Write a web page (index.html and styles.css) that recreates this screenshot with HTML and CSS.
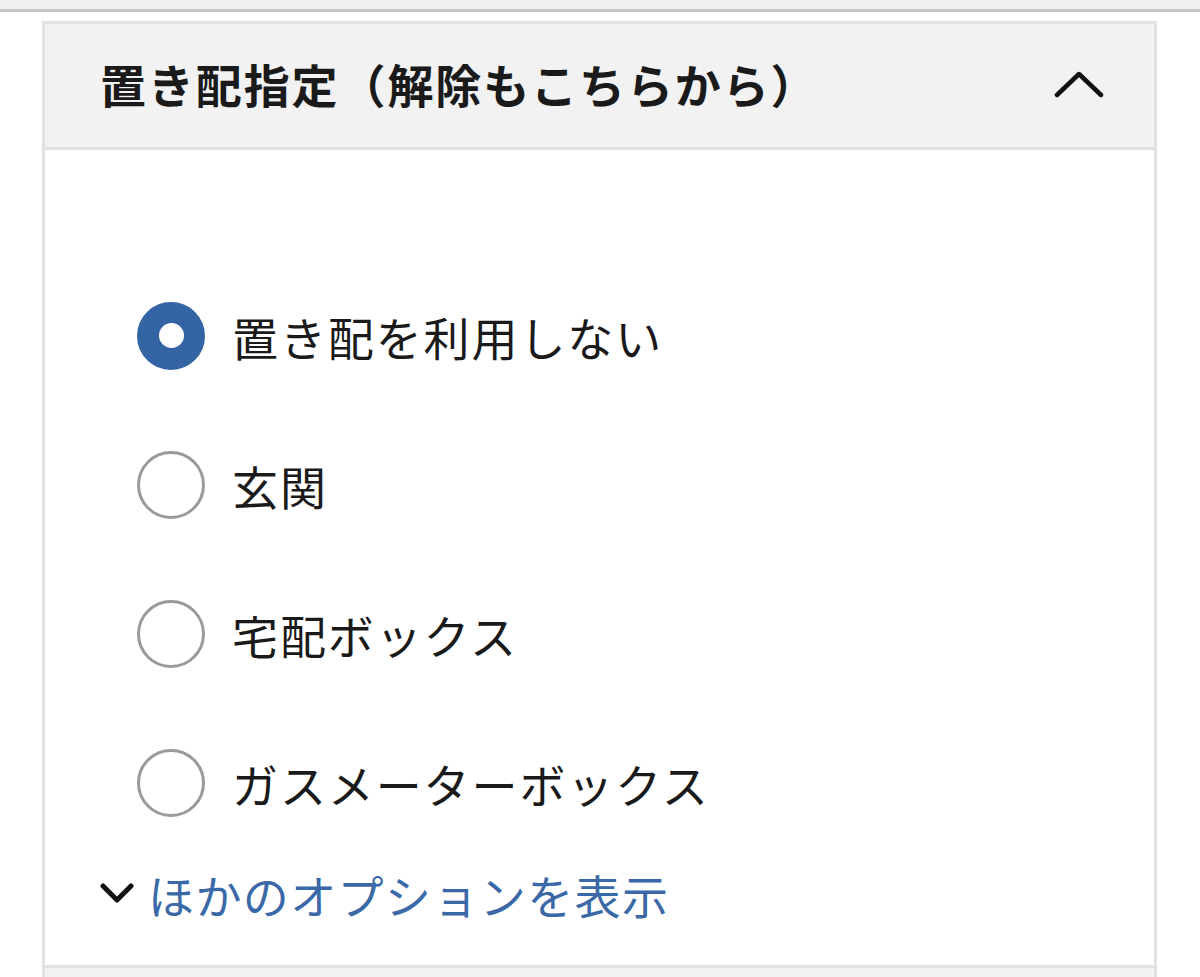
FILE: index.html
```html
<!DOCTYPE html>
<html lang="ja">
<head>
    <meta charset="UTF-8">
    <meta name="viewport" content="width=device-width, initial-scale=1.0">
    <title>置き配指定</title>
    <link rel="stylesheet" href="styles.css">
</head>
<body>
    <div class="topbar"></div>
    <div class="wrap">
        <div class="panel">
            <div class="panel-head">
                <h2>置き配指定（解除もこちらから）</h2>
                <svg class="chev-up" width="50" height="30" viewBox="0 0 50 30">
                    <path d="M3 26 L25 5 L47 26" fill="none" stroke="#111" stroke-width="4.5" stroke-linecap="round" stroke-linejoin="round"/>
                </svg>
            </div>
            <div class="panel-body">
                <label class="opt"><span class="radio checked"></span>置き配を利用しない</label>
                <label class="opt"><span class="radio"></span>玄関</label>
                <label class="opt"><span class="radio"></span>宅配ボックス</label>
                <label class="opt"><span class="radio"></span>ガスメーターボックス</label>
                <a class="more" href="#">
                    <svg width="34" height="24" viewBox="0 0 34 24">
                        <path d="M3 4 L17 18 L31 4" fill="none" stroke="#111" stroke-width="5" stroke-linecap="round" stroke-linejoin="round"/>
                    </svg>
                    ほかのオプションを表示
                </a>
            </div>
        </div>
        <div class="next"></div>
    </div>
</body>
</html>
```

FILE: styles.css
```css
body { margin: 0; background: #fff; font-family: "Noto Sans CJK JP", "Noto Sans", sans-serif; color: #1a1a1a; }
.topbar { height: 9px; background: #f0f0f0; border-bottom: 3px solid #c6c6c6; }
.wrap { padding: 9px 43px 0 42px; }
.panel { border: 3px solid #e2e2e2; border-bottom: none; }
.panel-head { height: 123px; background: #f2f2f2; border-bottom: 3px solid #e2e2e2; display: flex; align-items: center; justify-content: space-between; padding: 0 50px 0 55px; }
.panel-head h2 { margin: 0; font-size: 46px; font-weight: 700; letter-spacing: 1.9px; padding-bottom: 6px; }
.chev-up { margin-bottom: 4px; }
.panel-body { padding: 111px 0 34px 92px; }
.opt { height: 149px; display: flex; align-items: center; font-size: 46px; letter-spacing: 1.9px; }
.radio { width: 62px; height: 62px; border: 3px solid #9a9a9a; border-radius: 50%; margin-right: 27px; box-sizing: content-box; flex: none; position: relative; }
.radio.checked { border-color: #3564a5; background: #3564a5; }
.radio.checked::after { content: ""; position: absolute; left: 50%; top: 50%; width: 25px; height: 25px; margin: -12.5px 0 0 -12.5px; border-radius: 50%; background: #fff; }
.more { display: flex; align-items: center; gap: 14px; height: 74px; margin-left: -37px; font-size: 46px; color: #3b69a7; text-decoration: none; letter-spacing: 1.4px; }
.next { border-top: 3px solid #e2e2e2; height: 20px; background: #f2f2f2; border-left: 3px solid #e2e2e2; border-right: 3px solid #e2e2e2; }
```
